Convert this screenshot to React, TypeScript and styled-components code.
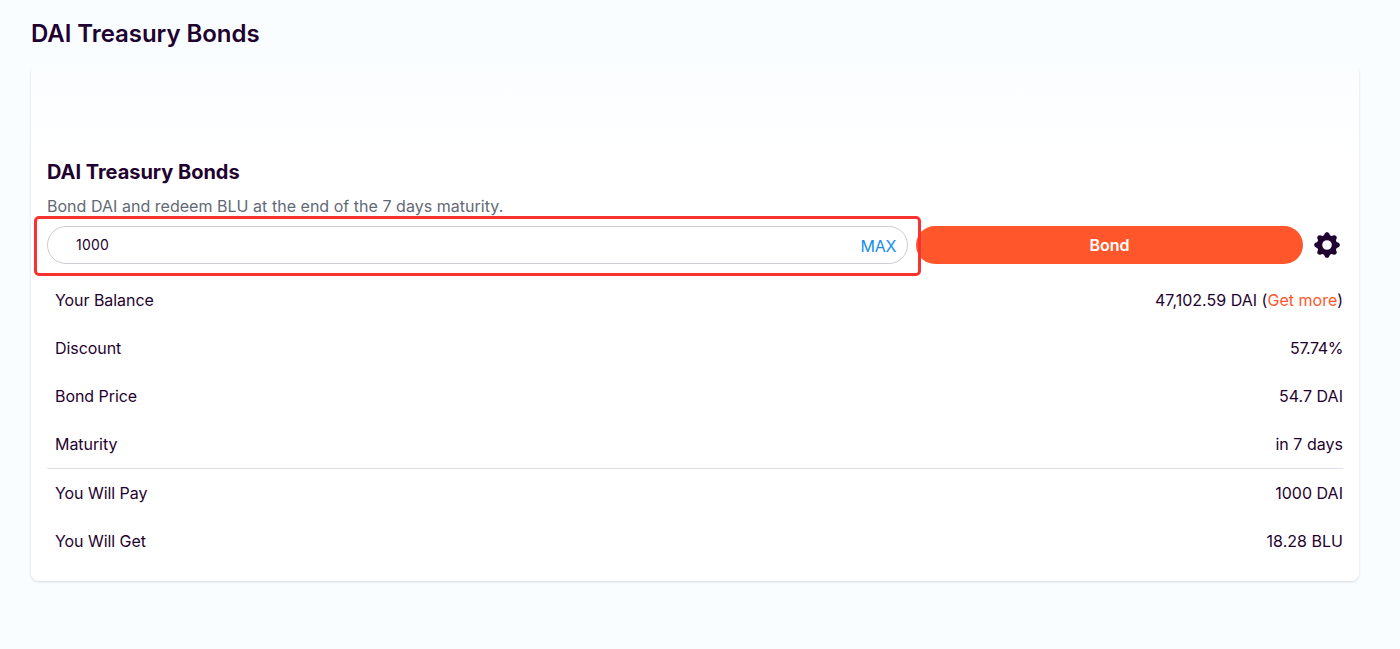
import React, { useState } from "react";
import styled, { createGlobalStyle } from "styled-components";
import { HiCog } from "react-icons/hi";

const GlobalStyle = createGlobalStyle`
  *, *::before, *::after { box-sizing: border-box; }
  body { margin: 0; background: #fafdff; color: #1f022f; font-family: Inter, sans-serif; font-size: 16px; line-height: 24px; }
`;
const Page = styled.main`
  min-height: 649px;
  padding: 18px 41px 0 31px;
`;
const PageTitle = styled.h1`
  margin: 0;
  font-size: 24px;
  line-height: 32px;
  font-weight: 600;
  letter-spacing: -0.05px;
`;
const Card = styled.section`
  margin-top: 15px;
  height: 516px;
  padding: 93px 16px 0;
  border-radius: 8px;
  background: linear-gradient(180deg, #fafdff 0, #ffffff 90px);
  box-shadow: 0 1px 3px rgba(0, 0, 0, 0.1), 0 1px 2px rgba(0, 0, 0, 0.06);
  clip-path: inset(4px -4px -5px -4px);
`;
const CardTitle = styled.h2`
  margin: 0;
  font-size: 20px;
  line-height: 28px;
  font-weight: 700;
  letter-spacing: -0.03px;
`;
const Description = styled.p`
  margin: 8px 0 0;
  color: #626976;
  letter-spacing: 0.03px;
`;
const Form = styled.div`
  display: flex;
  align-items: center;
  margin-top: 8px;
`;
const Field = styled.label`
  position: relative;
  display: flex;
  align-items: center;
  width: 861px;
  height: 38px;
  padding: 0 11px 0 28px;
  border: 1px solid #cdccd6;
  border-radius: 19px;
  background: #fff;
`;
const Highlight = styled.span`
  position: absolute;
  inset: -11px -14px -13px -14px;
  border: 3px solid #f63331;
  border-radius: 5px;
  pointer-events: none;
`;
const AmountInput = styled.input`
  flex: 1;
  min-width: 0;
  padding: 0;
  border: 0;
  outline: 0;
  background: transparent;
  color: inherit;
  font: 400 14px/20px Inter, sans-serif;
  letter-spacing: 0.2px;
`;
const MaxButton = styled.button`
  padding: 2px 0 0;
  border: 0;
  background: none;
  color: #168eea;
  font: 400 16px/24px Inter, sans-serif;
  letter-spacing: -0.3px;
`;
const BondButton = styled.button`
  width: 387px;
  height: 38px;
  margin-left: 8px;
  padding: 0;
  border: 0;
  border-radius: 19px;
  background: #ff572b;
  color: #fff;
  font: 600 16px/24px Inter, sans-serif;
`;
const SettingsButton = styled.button`
  display: flex;
  margin-left: 8px;
  padding: 0;
  border: 0;
  background: none;
  color: #1f022f;
`;
const Details = styled.dl<{ $divided?: boolean }>`
  margin: 0;
  border-top: ${(p) => (p.$divided ? "1px solid #e0e1e8" : "0")};
`;
const Row = styled.div`
  display: flex;
  align-items: center;
  justify-content: space-between;
  height: 48px;
  padding-left: 8px;
`;
const Term = styled.dt`
  letter-spacing: -0.06px;
`;
const Value = styled.dd<{ $tight?: boolean }>`
  margin: 0;
  letter-spacing: ${(p) => (p.$tight ? "-0.4px" : "0.02px")};
`;
const Link = styled.a`
  color: #ff572b;
`;
const Summary = styled.div`
  margin-top: 12px;
`;

const DetailRow = ({ label, tight, children }: { label: string; tight?: boolean; children: React.ReactNode }) => (
  <Row>
    <Term>{label}</Term>
    <Value $tight={tight}>{children}</Value>
  </Row>
);

export default function App() {
  const [amount, setAmount] = useState("1000");
  return (
    <>
      <GlobalStyle />
      <Page>
        <PageTitle>DAI Treasury Bonds</PageTitle>
        <Card>
          <CardTitle>DAI Treasury Bonds</CardTitle>
          <Description>Bond DAI and redeem BLU at the end of the 7 days maturity.</Description>
          <Form>
            <Field>
              <AmountInput value={amount} onChange={(e) => setAmount(e.target.value)} />
              <MaxButton>MAX</MaxButton>
              <Highlight />
            </Field>
            <BondButton>Bond</BondButton>
            <SettingsButton aria-label="Settings">
              <HiCog size={32} />
            </SettingsButton>
          </Form>
          <Summary>
            <Details>
              <DetailRow label="Your Balance">47,102.59 DAI (<Link>Get more</Link>)</DetailRow>
              <DetailRow label="Discount" tight>57.74%</DetailRow>
              <DetailRow label="Bond Price">54.7 DAI</DetailRow>
              <DetailRow label="Maturity">in 7 days</DetailRow>
            </Details>
            <Details $divided>
              <DetailRow label="You Will Pay">1000 DAI</DetailRow>
              <DetailRow label="You Will Get">18.28 BLU</DetailRow>
            </Details>
          </Summary>
        </Card>
      </Page>
    </>
  );
}
